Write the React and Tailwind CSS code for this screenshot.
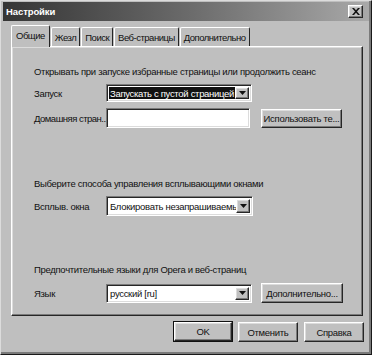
import React from 'react';

// Classic 3D bevels
const raised =
  'border border-t-white border-l-white border-r-[#262626] border-b-[#262626] shadow-[inset_-1px_-1px_0_#7a7a7a,inset_1px_1px_0_#dcdcdc]';
const sunken =
  'border border-t-[#7a7a7a] border-l-[#7a7a7a] border-r-white border-b-white shadow-[inset_1px_1px_0_#262626,inset_-1px_-1px_0_#dcdcdc]';

const Arrow = () => (
  <div className={`w-[14px] h-full bg-[#c0c0c0] flex items-center justify-center ${raised}`}>
    <svg width="7" height="4" viewBox="0 0 7 4">
      <path d="M0 0h7L3.5 4z" fill="#111" />
    </svg>
  </div>
);

const Button = ({ children, className = '', isDefault = false }) => (
  <div
    className={`${isDefault ? 'outline outline-1 outline-[#111]' : ''} bg-[#c0c0c0] flex items-center justify-center whitespace-nowrap ${raised} ${className}`}
  >
    {children}
  </div>
);

const Combo = ({ value, selected = false, className = '' }) => (
  <div className={`flex bg-white p-[2px] ${sunken} ${className}`}>
    <div
      className={`flex-1 flex items-center px-[1px] overflow-hidden whitespace-nowrap ${
        selected ? 'bg-[#111] text-white' : 'text-[#111]'
      }`}
    >
      {value}
    </div>
    <Arrow />
  </div>
);

const tabs = ['Общие', 'Жезл', 'Поиск', 'Веб-страницы', 'Дополнительно'];

export default function App() {
  return (
    <div
      className="w-[372px] h-[355px] bg-[#bfbfbf] text-[#111] text-[9.5px] tracking-[-0.3px] leading-[13px] flex flex-col border border-t-[#dcdcdc] border-l-[#dcdcdc] border-r-[#1a1a1a] border-b-[#1a1a1a] shadow-[inset_-2px_-2px_0_#7a7a7a]"
      style={{ fontFamily: '"Liberation Sans", Arial, sans-serif' }}
    >
      {/* Title bar */}
      <div className="h-[19px] mx-[2px] mt-[1px] flex items-center justify-between pl-[3px] pr-[6px] bg-gradient-to-r from-[#353535] via-[#6a6a6a] to-[#a9a9a9]">
        <span className="text-white font-bold text-[9.5px] tracking-[-0.1px]">Настройки</span>
        <Button className="w-[15px] h-[13px]">
          <svg width="8" height="7" viewBox="0 0 8 7">
            <path d="M0 0h2l2 2.3L6 0h2L5 3.5 8 7H6L4 4.7 2 7H0l3-3.5z" fill="#111" />
          </svg>
        </Button>
      </div>

      {/* Tabs */}
      <div className="flex items-end ml-[10px] mt-[3px] h-[22px] tracking-[-0.5px]">
        {tabs.map((t, i) => (
          <div
            key={t}
            className={`flex items-center bg-[#bfbfbf] border border-b-0 border-t-white border-l-white border-r-[#262626] rounded-t-[2px] mr-[1px] ${
              i === 0 ? 'h-[22px] pb-[2px] z-10 -mb-[1px] px-[4px]' : 'h-[19px] px-[3px]'
            }`}
          >
            {t}
          </div>
        ))}
      </div>

      {/* Panel */}
      <div className={`ml-[10px] w-[352px] h-[270px] flex flex-col pl-[22px] pt-[18px] ${raised}`}>
        <div>Открывать при запуске избранные страницы или продолжить сеанс</div>

        <div className="flex items-center mt-[6px] h-[18px]">
          <div className="w-[72px]">Запуск</div>
          <Combo value="Запускать с пустой страницей" selected className="w-[146px] h-[18px]" />
        </div>

        <div className="flex items-center mt-[6px] h-[20px]">
          <div className="w-[72px] whitespace-nowrap tracking-[-0.5px]">Домашняя стран...</div>
          <div className={`w-[144px] h-[20px] bg-white ${sunken}`} />
          <Button className="ml-[11px] w-[81px] h-[19px]">Использовать те...</Button>
        </div>

        <div className="mt-[49px]">Выберите способа управления всплывающими окнами</div>

        <div className="flex items-center mt-[6px] h-[20px]">
          <div className="w-[72px]">Всплыв. окна</div>
          <Combo value="Блокировать незапрашиваемые окна" className="w-[147px] h-[20px]" />
        </div>

        <div className="mt-[47px]">Предпочтительные языки для Opera и веб-страниц</div>

        <div className="flex items-center mt-[7px] h-[20px]">
          <div className="w-[72px]">Язык</div>
          <Combo value="русский [ru]" className="w-[146px] h-[19px]" />
          <Button className="ml-[9px] w-[82px] h-[20px]">Дополнительно...</Button>
        </div>
      </div>

      {/* Footer buttons */}
      <div className="flex justify-end gap-[6px] mt-[6px] mr-[7px]">
        <Button isDefault className="w-[58px] h-[19px]">OK</Button>
        <Button className="w-[60px] h-[20px]">Отменить</Button>
        <Button className="w-[60px] h-[20px]">Справка</Button>
      </div>
    </div>
  );
}
